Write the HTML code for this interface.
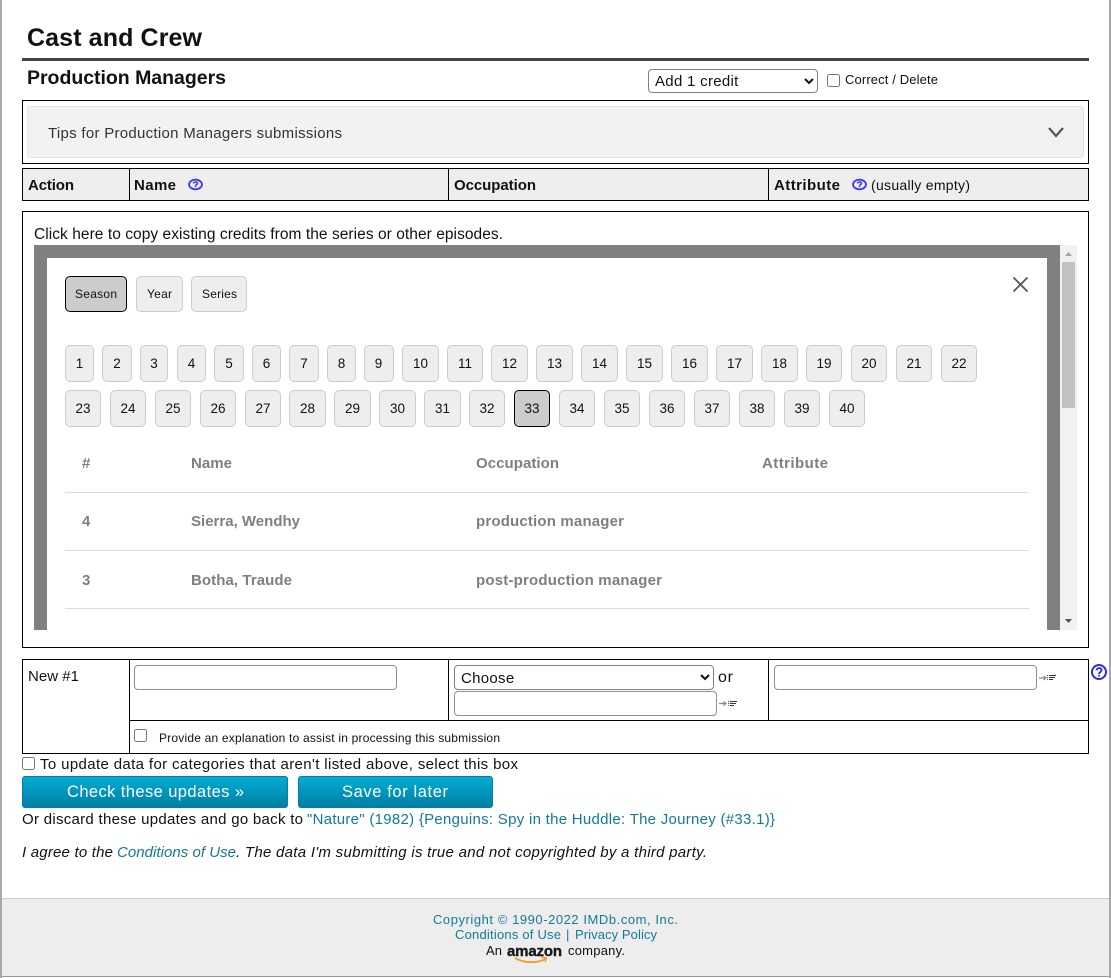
<!DOCTYPE html>
<html><head><meta charset="utf-8"><title>Cast and Crew</title>
<style>
html,body{margin:0;padding:0;background:#fff}
body{position:relative;width:1111px;height:978px;overflow:hidden;font-family:"Liberation Sans",sans-serif;color:#111}
div,select,input,.n{position:absolute;box-sizing:border-box}
.bx{border:1px solid #000}
.k{background:#000}
.n{height:37px;background:#eee;border:1px solid #ccc;border-radius:5px}
.r1{top:345px}.r2{top:390px}
.sel{background:#ccc;border-color:#000}
.hl{left:65px;width:964px;height:1px;background:#ddd}
select{font-family:"Liberation Sans",sans-serif;font-size:15px;letter-spacing:.3px;color:#111;background:#fff;border:1px solid #808080;border-radius:4px;padding:1px 0 0 2px;margin:0}
input[type=text]{background:#fff;border:1px solid #8f8f8f;border-radius:4px;margin:0;padding:0}
input[type=checkbox]{margin:0;width:13px;height:13px}
.btn{background:linear-gradient(#02acd4,#007fa5);border:1px solid #0a7c9c;border-radius:3px;height:32px;top:776px}
svg{position:absolute;left:0;top:0;pointer-events:none}
text{font-family:"Liberation Sans",sans-serif;fill:#111}
.b{font-weight:bold}
.g{font-weight:bold;fill:#7f7f7f;font-size:15px}
.l{fill:#137a96}
.c{text-anchor:middle;font-size:13.5px}
</style></head><body>
<div style="left:0;top:0;width:2px;height:978px;background:#a8a8a8"></div>
<div style="right:0;top:0;width:2px;height:978px;background:#a8a8a8"></div>
<div style="left:22px;top:58px;width:1067px;height:3px;background:#444"></div>
<select style="left:648px;top:69px;width:170px;height:24px"><option>Add 1 credit</option></select>
<input type="checkbox" style="left:827px;top:74px">
<div class="bx" style="left:22px;top:100px;width:1067px;height:64px"></div>
<div style="left:27px;top:106px;width:1057px;height:52px;background:#f2f2f2;border:1px solid #e4e4e4;border-radius:4px"></div>
<div class="bx" style="left:22px;top:168px;width:1067px;height:33px;background:#eee"></div>
<div class="k" style="left:129px;top:168px;width:1px;height:33px"></div>
<div class="k" style="left:448px;top:168px;width:1px;height:33px"></div>
<div class="k" style="left:768px;top:168px;width:1px;height:33px"></div>
<div class="bx" style="left:22px;top:211px;width:1067px;height:437px"></div>
<div style="left:34px;top:245px;width:1026px;height:385px;background:#808080"></div>
<div style="left:47px;top:258px;width:1000px;height:372px;background:#fff"></div>
<div style="left:1060px;top:245px;width:17px;height:385px;background:#f1f1f1"></div>
<div style="left:1062px;top:262px;width:13px;height:146px;background:#c1c1c1"></div>
<div class="n sel" style="left:65px;top:276px;width:62px;height:36px"></div>
<div class="n" style="left:136px;top:276px;width:47px;height:36px"></div>
<div class="n" style="left:191px;top:276px;width:56px;height:36px"></div>
<div class="n r1" style="left:65px;width:29px"></div><div class="n r1" style="left:102px;width:30px"></div><div class="n r1" style="left:140px;width:28px"></div><div class="n r1" style="left:177px;width:29px"></div><div class="n r1" style="left:214px;width:30px"></div><div class="n r1" style="left:252px;width:29px"></div><div class="n r1" style="left:289px;width:30px"></div><div class="n r1" style="left:327px;width:29px"></div><div class="n r1" style="left:364px;width:30px"></div>
<div class="n r1" style="left:402px;width:37px"></div><div class="n r1" style="left:447px;width:36px"></div><div class="n r1" style="left:491px;width:37px"></div><div class="n r1" style="left:536px;width:37px"></div><div class="n r1" style="left:581px;width:37px"></div><div class="n r1" style="left:626px;width:37px"></div><div class="n r1" style="left:671px;width:37px"></div><div class="n r1" style="left:716px;width:37px"></div><div class="n r1" style="left:761px;width:37px"></div><div class="n r1" style="left:806px;width:36px"></div><div class="n r1" style="left:851px;width:36px"></div><div class="n r1" style="left:896px;width:36px"></div><div class="n r1" style="left:941px;width:36px"></div>
<div class="n r2" style="left:65px;width:36px"></div><div class="n r2" style="left:110px;width:36px"></div><div class="n r2" style="left:155px;width:36px"></div><div class="n r2" style="left:200px;width:36px"></div><div class="n r2" style="left:245px;width:36px"></div><div class="n r2" style="left:289px;width:37px"></div><div class="n r2" style="left:334px;width:37px"></div><div class="n r2" style="left:379px;width:37px"></div><div class="n r2" style="left:424px;width:37px"></div><div class="n r2" style="left:469px;width:36px"></div><div class="n r2 sel" style="left:514px;width:36px"></div><div class="n r2" style="left:559px;width:36px"></div><div class="n r2" style="left:604px;width:36px"></div><div class="n r2" style="left:649px;width:36px"></div><div class="n r2" style="left:694px;width:36px"></div><div class="n r2" style="left:739px;width:36px"></div><div class="n r2" style="left:784px;width:36px"></div><div class="n r2" style="left:829px;width:36px"></div>
<div class="hl" style="top:492px"></div><div class="hl" style="top:550px"></div><div class="hl" style="top:608px"></div>
<div class="bx" style="left:22px;top:659px;width:1067px;height:95px"></div>
<div class="k" style="left:129px;top:659px;width:1px;height:95px"></div>
<div class="k" style="left:448px;top:659px;width:1px;height:61px"></div>
<div class="k" style="left:768px;top:659px;width:1px;height:61px"></div>
<div class="k" style="left:129px;top:720px;width:960px;height:1px"></div>
<input type="text" style="left:134px;top:665px;width:263px;height:25px">
<select style="left:454px;top:665px;width:260px;height:25px"><option>Choose</option></select>
<input type="text" style="left:454px;top:691px;width:263px;height:25px">
<input type="text" style="left:774px;top:665px;width:263px;height:25px">
<input type="checkbox" style="left:134px;top:729px">
<input type="checkbox" style="left:22px;top:757px">
<div class="btn" style="left:22px;width:266px"></div>
<div class="btn" style="left:298px;width:195px"></div>
<div style="left:2px;top:898px;width:1107px;height:79px;background:#ededed;border-top:1px solid #ccc;border-bottom:1px solid #999"></div>
<svg width="1111" height="978" viewBox="0 0 1111 978">
<text class="b" x="27" y="46" font-size="25" textLength="175">Cast and Crew</text>
<text class="b" x="27" y="84" font-size="19.500" textLength="199">Production Managers</text>
<text x="845" y="84" font-size="13" textLength="93">Correct / Delete</text>
<text x="48" y="138" font-size="15" textLength="294" style="fill:#333">Tips for Production Managers submissions</text>
<path d="M1049 128l7 8 7-8" fill="none" stroke="#555" stroke-width="2.200"/>
<text class="b" x="28" y="190" font-size="15" textLength="46">Action</text>
<text class="b" x="134" y="190" font-size="15" textLength="42">Name</text>
<text class="b" x="454" y="190" font-size="15" textLength="82">Occupation</text>
<text class="b" x="774" y="190" font-size="15" textLength="66">Attribute</text>
<text x="871" y="190" font-size="14" textLength="99">(usually empty)</text>
<g fill="none" stroke="#3c3cf0" stroke-width="1.800"><ellipse cx="195.500" cy="184.500" rx="6.500" ry="4.800"/><ellipse cx="859.500" cy="184.500" rx="6.500" ry="4.800"/></g>
<path d="M193.500 183.500c.5-2 4-2 4 0 0 1-2 1-2 2.500v1M857.500 183.500c.5-2 4-2 4 0 0 1-2 1-2 2.500v1" fill="none" stroke="#3c3cf0" stroke-width="1.500"/>
<text x="34" y="239" font-size="15.500" textLength="469">Click here to copy existing credits from the series or other episodes.</text>
<path d="M1065 256l3.500-4 3.500 4z" fill="#a3a3a3"/><path d="M1065 619l3.500 4 3.500-4z" fill="#505050"/>
<path d="M1013.500 277.500l14 14M1027.500 277.500l-14 14" stroke="#555" stroke-width="1.800"/>
<g font-size="12"><text x="75" y="298" textLength="42">Season</text><text x="147" y="298" textLength="25">Year</text><text x="202" y="298" textLength="35">Series</text></g>
<g>
<text class="c" x="79.500" y="368">1</text><text class="c" x="117" y="368">2</text><text class="c" x="154" y="368">3</text><text class="c" x="191.500" y="368">4</text><text class="c" x="229" y="368">5</text><text class="c" x="266.500" y="368">6</text><text class="c" x="304" y="368">7</text><text class="c" x="341.500" y="368">8</text><text class="c" x="378.500" y="368">9</text>
<text class="c" x="420.500" y="368">10</text><text class="c" x="465" y="368">11</text><text class="c" x="509.500" y="368">12</text><text class="c" x="554.500" y="368">13</text><text class="c" x="599.500" y="368">14</text><text class="c" x="644.500" y="368">15</text><text class="c" x="689.500" y="368">16</text><text class="c" x="734.500" y="368">17</text><text class="c" x="779.500" y="368">18</text><text class="c" x="824" y="368">19</text><text class="c" x="869" y="368">20</text><text class="c" x="914" y="368">21</text><text class="c" x="959" y="368">22</text>
<text class="c" x="83" y="413">23</text><text class="c" x="128" y="413">24</text><text class="c" x="173" y="413">25</text><text class="c" x="218" y="413">26</text><text class="c" x="263" y="413">27</text><text class="c" x="307.500" y="413">28</text><text class="c" x="352.500" y="413">29</text><text class="c" x="397.500" y="413">30</text><text class="c" x="442.500" y="413">31</text><text class="c" x="487" y="413">32</text><text class="c" x="532" y="413">33</text><text class="c" x="577" y="413">34</text><text class="c" x="622" y="413">35</text><text class="c" x="667" y="413">36</text><text class="c" x="712" y="413">37</text><text class="c" x="757" y="413">38</text><text class="c" x="802" y="413">39</text><text class="c" x="847" y="413">40</text>
</g>
<text class="g" x="82" y="468" textLength="10">#</text>
<text class="g" x="191" y="468" textLength="41">Name</text>
<text class="g" x="476" y="468" textLength="83">Occupation</text>
<text class="g" x="762" y="468" textLength="66">Attribute</text>
<text class="g" x="82" y="526" textLength="9">4</text>
<text class="g" x="191" y="526" textLength="109">Sierra, Wendhy</text>
<text class="g" x="476" y="526" textLength="148">production manager</text>
<text class="g" x="82" y="585" textLength="9">3</text>
<text class="g" x="191" y="585" textLength="101">Botha, Traude</text>
<text class="g" x="476" y="585" textLength="186">post-production manager</text>
<text x="28" y="681" font-size="15" textLength="51">New #1</text>
<text x="718" y="682" font-size="16" textLength="15">or</text>
<g fill="none" stroke="#888" stroke-width="1.200"><path d="M719 703.500h7M723.500 701.500l2.500 2-2.500 2M1039 678h7M1043.500 676l2.500 2-2.500 2"/></g>
<g stroke="#333" stroke-width="1"><path d="M730 701.500h7M730 703.500h6M730 705.500h4M1049 675.500h7M1049 677.500h6M1049 679.500h4"/></g>
<g stroke="#555" stroke-width="1"><path d="M728 701.500h1M728 703.500h1M728 705.500h1M1047 675.500h1M1047 677.500h1M1047 679.500h1"/></g>
<circle cx="1099" cy="672" r="7" fill="none" stroke="#2a2ae8" stroke-width="2"/>
<path d="M1096.500 670.300c.5-3 5-3 5 0 0 2-2.500 1.800-2.500 3.700M1099 675v1.500" fill="none" stroke="#2a2ae8" stroke-width="1.900"/>
<text x="159" y="742" font-size="12" textLength="341">Provide an explanation to assist in processing this submission</text>
<text x="40" y="769" font-size="15" textLength="478">To update data for categories that aren't listed above, select this box</text>
<text x="67" y="797" font-size="16.500" textLength="177" style="fill:#fff">Check these updates »</text>
<text x="342" y="797" font-size="16.500" textLength="106" style="fill:#fff">Save for later</text>
<text x="22" y="824" font-size="15" textLength="281">Or discard these updates and go back to</text>
<text class="l" x="307" y="824" font-size="15" textLength="468">"Nature" (1982) {Penguins: Spy in the Huddle: The Journey (#33.1)}</text>
<g font-size="15" font-style="italic"><text x="22" y="857" textLength="91">I agree to the</text><text class="l" x="117" y="857" textLength="119">Conditions of Use</text><text x="236" y="857" textLength="471">. The data I'm submitting is true and not copyrighted by a third party.</text></g>
<g font-size="13"><text class="l" x="433" y="924" textLength="245">Copyright © 1990-2022 IMDb.com, Inc.</text>
<text class="l" x="455" y="939" textLength="106">Conditions of Use</text><text class="l" x="566" y="939">|</text><text class="l" x="575" y="939" textLength="82">Privacy Policy</text>
<text x="486" y="955" textLength="16">An</text><text x="568" y="955" textLength="57">company.</text></g>
<text class="b" x="507" y="956" font-size="15" textLength="55" style="fill:#1a1a1a;stroke:#1a1a1a;stroke-width:.4">amazon</text>
<path d="M515 958c9 5.500 23 5.500 31 .5" fill="none" stroke="#f19a1f" stroke-width="1.800"/><path d="M541 957l5.500 1-1.500 4" fill="none" stroke="#f19a1f" stroke-width="1.200"/>
</svg>
</body></html>
